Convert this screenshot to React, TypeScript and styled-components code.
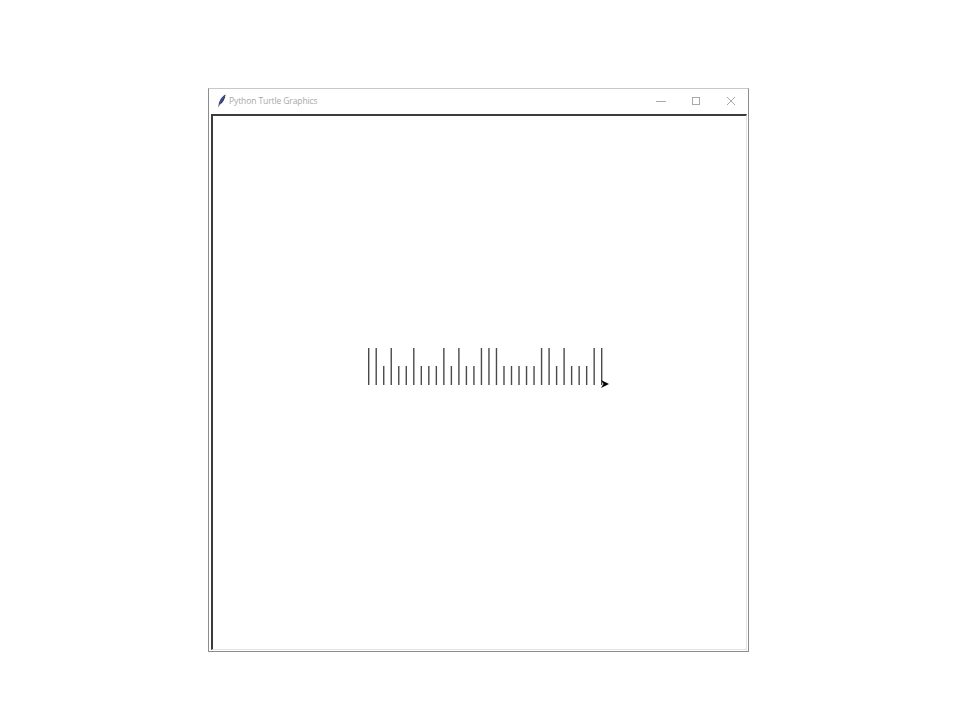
import React from "react";
import styled, { createGlobalStyle } from "styled-components";

const Global = createGlobalStyle`
  html, body { margin: 0; padding: 0; background: #ffffff; }
  body { width: 960px; height: 720px; overflow: hidden; font-family: "Open Sans", "Noto Sans", sans-serif; }
`;

const Page = styled.div`
  width: 960px;
  height: 720px;
  box-sizing: border-box;
  padding: 88px 0 0 208px;
  display: flex;
  align-items: flex-start;
`;

const Window = styled.div`
  width: 541px;
  height: 564px;
  box-sizing: border-box;
  border: 1px solid #8c8c8c;
  border-top-color: #c8c8c8;
  display: flex;
  flex-direction: column;
  background: #ffffff;
`;

const TitleBar = styled.div`
  height: 23px;
  display: flex;
  align-items: center;
  padding-left: 8px;
  flex-shrink: 0;
`;

const Title = styled.span`
  margin-left: 3px;
  font-family: "Open Sans", "Noto Sans", sans-serif;
  font-size: 8.5px;
  color: #a8a8a8;
  letter-spacing: -0.1px;
  flex: 1;
`;

const Controls = styled.div`
  display: flex;
  align-items: center;
  height: 100%;
`;

const ControlButton = styled.div`
  width: 35px;
  height: 100%;
  display: flex;
  align-items: center;
  justify-content: center;
`;

const Body = styled.div`
  flex: 1;
  display: flex;
  padding: 2px 1px 2px 2px;
`;

const Canvas = styled.div`
  flex: 1;
  box-sizing: border-box;
  border-top: 2px solid #3c3c3c;
  border-left: 2px solid #3c3c3c;
  border-right: 1px solid #e3e3e3;
  border-bottom: 1px solid #e3e3e3;
  background: #ffffff;
  display: flex;
`;

const Drawing = styled.svg`
  width: 100%;
  height: 100%;
  display: block;
`;

const pattern = "TTSTSSTSSSTSTSSTTTSSSSSTTSTSSSTT";

const FeatherIcon = () => (
  <svg width="9" height="14" viewBox="0 0 9 14">
    <path d="M8.6 0.4 C6 1.4 3 5 1.8 9.4 L1.2 13.6 L2.9 10.6 C6 8.6 8.1 5 8.6 0.4 Z" fill="#2c3570" />
    <path d="M7.6 2 C5.4 4.6 3.6 7.6 2.4 11" stroke="#6a78b4" strokeWidth="0.6" fill="none" />
  </svg>
);

export default function App() {
  const x0 = 155.7;
  const step = 7.516;
  return (
    <>
      <Global />
      <Page>
        <Window>
          <TitleBar>
            <FeatherIcon />
            <Title>Python Turtle Graphics</Title>
            <Controls>
              <ControlButton>
                <svg width="10" height="10" viewBox="0 0 10 10">
                  <line x1="0" y1="5.5" x2="10" y2="5.5" stroke="#a8a8a8" strokeWidth="1" />
                </svg>
              </ControlButton>
              <ControlButton>
                <svg width="10" height="10" viewBox="0 0 10 10">
                  <rect x="1.5" y="1.5" width="7" height="7" fill="none" stroke="#a8a8a8" strokeWidth="1" />
                </svg>
              </ControlButton>
              <ControlButton>
                <svg width="10" height="10" viewBox="0 0 10 10">
                  <path d="M1 1 L9 9 M9 1 L1 9" stroke="#a8a8a8" strokeWidth="1" />
                </svg>
              </ControlButton>
            </Controls>
          </TitleBar>
          <Body>
            <Canvas>
              <Drawing viewBox="0 0 533 533" preserveAspectRatio="none">
                {pattern.split("").map((c, i) => {
                  const x = x0 + i * step;
                  return (
                    <line
                      key={i}
                      x1={x}
                      x2={x}
                      y1={c === "T" ? 232 : 250}
                      y2={269}
                      stroke="#4a4a4a"
                      strokeWidth={1.4}
                    />
                  );
                })}
                <polygon points="396,268 388,264 390.5,268 388,272" fill="#000000" />
              </Drawing>
            </Canvas>
          </Body>
        </Window>
      </Page>
    </>
  );
}
